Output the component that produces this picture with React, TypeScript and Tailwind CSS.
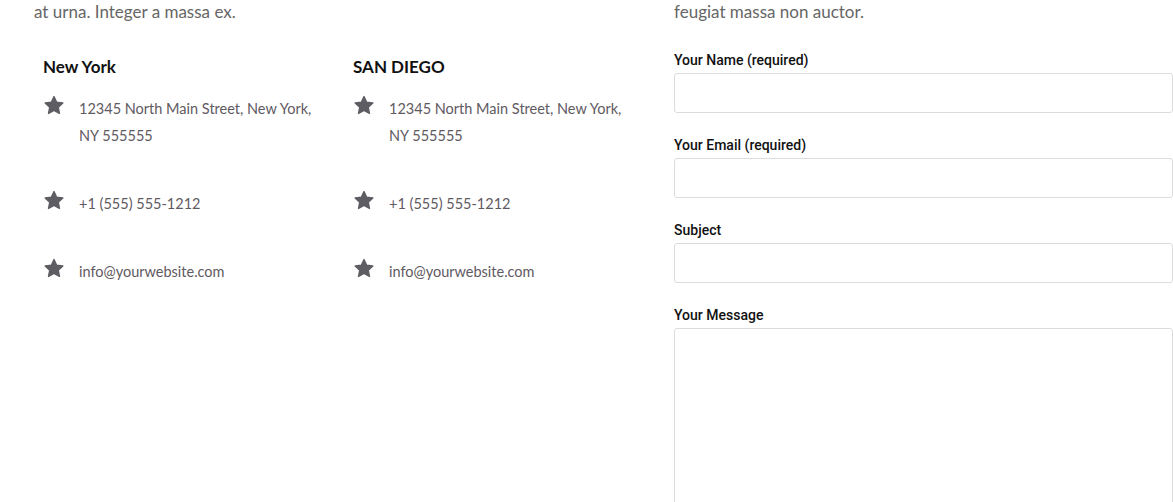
import React from "react";

type Office = {
  city: string;
  address: string[];
  phone: string;
  email: string;
};

const offices: Office[] = [
  {
    city: "New York",
    address: ["12345 North Main Street, New York,", "NY 555555"],
    phone: "+1 (555) 555-1212",
    email: "info@yourwebsite.com",
  },
  {
    city: "SAN DIEGO",
    address: ["12345 North Main Street, New York,", "NY 555555"],
    phone: "+1 (555) 555-1212",
    email: "info@yourwebsite.com",
  },
];

const fields = ["Your Name (required)", "Your Email (required)", "Subject"];

function Star() {
  return (
    <svg
      viewBox="0 0 24 24"
      className="w-[22px] h-[21px] shrink-0 mt-px"
      fill="#5d5d63"
      stroke="#5d5d63"
      strokeWidth="1.6"
      strokeLinejoin="round"
    >
      <path d="M12 1.8l3.05 6.5 7.05.9-5.2 4.85 1.35 7-6.25-3.45-6.25 3.45 1.35-7L1.9 9.2l7.05-.9z" />
    </svg>
  );
}

function InfoRow({ lines }: { lines: string[] }) {
  return (
    <div className="flex gap-[14px] mb-[40px]">
      <Star />
      <p className="text-[14.5px] leading-[27px] pt-px text-[#5f5a62]">
        {lines.map((l, i) => (
          <span key={i} className="block">
            {l}
          </span>
        ))}
      </p>
    </div>
  );
}

export default function App(): React.ReactElement {
  return (
    <div className="flex w-[1173px] h-[502px] overflow-hidden bg-white font-['Lato',sans-serif]">
      <section className="w-[674px] shrink-0 pl-[34px]">
        <p className="text-[17px] leading-[24px] text-[#666]">
          at urna. Integer a massa ex.
        </p>
        <div className="grid grid-cols-[310px_310px] pl-[9px] mt-[31px]">
          {offices.map((o) => (
            <article key={o.city} className="flex flex-col">
              <h3 className="text-[17px] leading-[24px] font-bold text-[#111] mb-[15px]">
                {o.city}
              </h3>
              <InfoRow lines={o.address} />
              <InfoRow lines={[o.phone]} />
              <InfoRow lines={[o.email]} />
            </article>
          ))}
        </div>
      </section>

      <section className="flex-1">
        <p className="text-[17px] leading-[24px] text-[#666]">
          feugiat massa non auctor.
        </p>
        <form className="mt-[26px] font-['Roboto',sans-serif]">
          {fields.map((f) => (
            <div key={f} className="mb-[22px]">
              <label className="block text-[14px] leading-[20px] font-medium text-[#111] mb-[3px]">
                {f}
              </label>
              <input
                type="text"
                className="block w-full h-[40px] border border-[#dcdcdc] rounded-[3px] bg-white"
              />
            </div>
          ))}
          <div>
            <label className="block text-[14px] leading-[20px] font-medium text-[#111] mb-[3px]">
              Your Message
            </label>
            <textarea className="block w-full h-[240px] border border-[#dcdcdc] rounded-[3px] bg-white resize-none" />
          </div>
        </form>
      </section>
    </div>
  );
}
